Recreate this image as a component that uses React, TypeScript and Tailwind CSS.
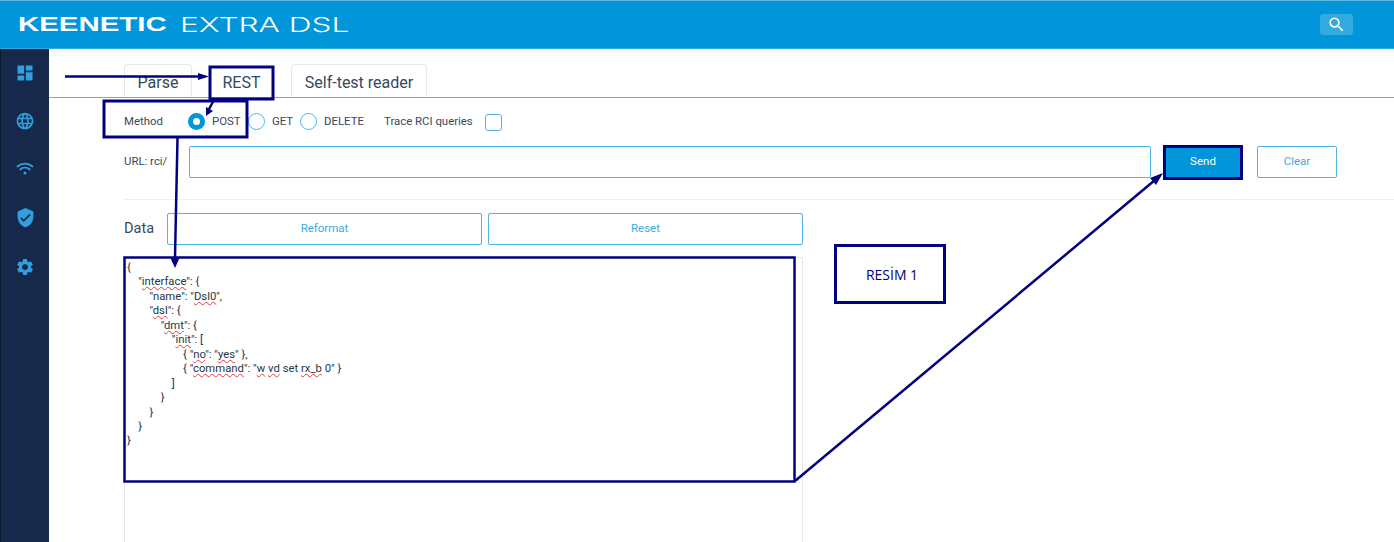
import React from "react";
import { MdDashboard, MdLanguage, MdVerifiedUser, MdSettings, MdSearch } from "react-icons/md";

const W = ({ children }: { children: React.ReactNode }) => (
  <span className="underline decoration-wavy decoration-[#e53935] decoration-1 underline-offset-[1px] [text-decoration-skip-ink:none]">{children}</span>
);

function Radio({ checked, label, labelClass }: { checked?: boolean; label: string; labelClass: string }) {
  return (
    <div className="flex items-center">
      {checked ? (
        <span className="w-[17px] h-[17px] rounded-full border-[5px] border-[#0096d9] bg-white" />
      ) : (
        <span className="w-[17px] h-[17px] rounded-full border border-[#4db5e8] bg-white" />
      )}
      <span className={labelClass}>{label}</span>
    </div>
  );
}

function Tab({ label, className }: { label: string; className: string }) {
  return (
    <div className={`h-[33px] flex items-center justify-center text-[16px] text-[#34495e] rounded-t-[4px] bg-white ${className}`}>
      {label}
    </div>
  );
}

function OutlineButton({ label, className }: { label: string; className: string }) {
  return (
    <button className={`h-[32px] flex items-center justify-center text-[11.5px] text-[#3fa9e0] border border-[#4db5e8] rounded-[2px] bg-white ${className}`}>
      {label}
    </button>
  );
}

const code = (
  <pre className="text-[11.3px] leading-[14.45px] text-[#263645] [font-family:Roboto,sans-serif]">
    {"{\n    \""}<W>interface</W>{"\": {\n        \"name\": \""}<W>Dsl0</W>{"\",\n        \""}<W>dsl</W>{"\": {\n            \""}<W>dmt</W>{"\": {\n                \""}<W>init</W>{"\": [\n                    { \""}<W>no</W>{"\": \""}<W>yes</W>{"\" },\n                    { \""}<W>command</W>{"\": \""}<W>w</W>{" "}<W>vd</W>{" set "}<W>rx_b</W>{" 0\" }\n                ]\n            }\n        }\n    }\n}"}
  </pre>
);

export default function App() {
  return (
    <div className="relative w-[1394px] h-[542px] overflow-hidden bg-white [font-family:Roboto,sans-serif] flex flex-col">
      {/* Header */}
      <header className="h-[49px] shrink-0 bg-[#0096d9] border-t border-t-[#5fb8e0] border-b border-b-[#33a9e0] flex items-center pl-[18px] pr-[41px] overflow-hidden">
        <div className="w-[162px] shrink-0 mt-[2px] [font-family:'Liberation_Sans',sans-serif]">
          <span className="inline-block origin-left scale-x-[1.47] font-bold text-[20px] leading-none text-white whitespace-nowrap">KEENETIC</span>
        </div>
        <div className="shrink-0 mt-[2px] [font-family:Inter,sans-serif]">
          <span className="inline-block origin-left scale-x-[1.58] font-light text-[20px] leading-none text-white whitespace-nowrap">EXTRA DSL</span>
        </div>
        <div className="ml-auto w-[33px] h-[21px] rounded-[3px] bg-white/20 flex items-center justify-center">
          <MdSearch className="text-white" size={19} />
        </div>
      </header>

      <div className="flex flex-1 min-h-0">
        {/* Sidebar */}
        <aside className="w-[49px] shrink-0 bg-[#17294a] border-l border-l-[#0f1a2e] flex flex-col text-[#2f9fe0]">
          <div className="h-[48px] flex items-center justify-center"><MdDashboard size={20} /></div>
          <div className="h-[48px] flex items-center justify-center"><MdLanguage size={20} /></div>
          <div className="h-[48px] flex items-center justify-center">
            <svg width="20" height="20" viewBox="0 0 20 20" fill="none" stroke="currentColor" strokeWidth="1.8" strokeLinecap="round">
              <path d="M2.5 7.5C6.7 3.7 13.3 3.7 17.5 7.5" />
              <path d="M5.2 10.5C8 8 12 8 14.8 10.5" />
              <circle cx="10" cy="14" r="1.5" fill="currentColor" stroke="none" />
            </svg>
          </div>
          <div className="h-[49px] flex items-center justify-center"><MdVerifiedUser size={21} /></div>
          <div className="h-[49px] flex items-center justify-center"><MdSettings size={20} /></div>
        </aside>

        {/* Main */}
        <main className="flex-1 min-w-0 flex flex-col pt-[16px]">
          <div className="flex items-end pl-[75px] gap-[17px] border-b border-b-[#4db5e8] h-[33px]">
            <Tab label="Parse" className="w-[68px] pt-[3px] border border-[#e3e8ee] border-b-0" />
            <Tab label="REST" className="w-[65px] pt-[5px] border-0" />
            <Tab label="Self-test reader" className="w-[136px] pt-[3px] border border-[#e3e8ee] border-b-0" />
          </div>

          <div className="flex items-center h-[46px] mt-[1px] pl-[75px] text-[11.4px] text-[#34495e]">
            <span className="w-[64px]">Method</span>
            <Radio checked label="POST" labelClass="ml-[7px] w-[36px]" />
            <Radio label="GET" labelClass="ml-[7px] w-[28px]" />
            <Radio label="DELETE" labelClass="ml-[7px] w-[60px]" />
            <span className="w-[101px]">Trace RCI queries</span>
            <span className="w-[17px] h-[17px] border border-[#4db5e8] rounded-[3px] bg-white" />
          </div>

          <div className="flex items-center h-[32px] mt-[1px] pl-[75px] text-[11.4px] text-[#34495e]">
            <span className="w-[65px]">URL: rci/</span>
            <div className="w-[962px] h-[32px] border border-[#4db5e8] rounded-[2px]" />
            <button className="ml-[13px] w-[78px] h-[32px] bg-[#0096d9] text-white text-[11.5px]">Send</button>
            <OutlineButton label="Clear" className="ml-[15px] w-[80px]" />
          </div>

          <div className="h-px bg-[#eef0f3] ml-[75px] mt-[21px]" />

          <div className="flex items-center h-[32px] mt-[13px] pl-[75px]">
            <span className="w-[43px] text-[14.5px] text-[#34495e]">Data</span>
            <OutlineButton label="Reformat" className="w-[315px]" />
            <OutlineButton label="Reset" className="ml-[6px] w-[315px]" />
          </div>

          <div className="ml-[75px] mt-[12px] w-[679px] flex-1 border border-[#e3e6ee] border-b-0 pl-[2px] pt-[3px] overflow-hidden">
            {code}
          </div>
        </main>
      </div>

      {/* Annotation layer */}
      <svg className="absolute inset-0 pointer-events-none" width="1394" height="542" fill="none" stroke="#000080" strokeWidth="2.5">
        <rect x="210" y="67" width="63" height="32" strokeWidth="3" />
        <rect x="104" y="101" width="143" height="36" strokeWidth="3" />
        <rect x="1164.5" y="146.5" width="77" height="32" strokeWidth="3" />
        <rect x="124.5" y="257.5" width="670" height="224" strokeWidth="2.5" />
        <path d="M65 76.5H200" strokeWidth="2.5" />
        <path d="M209 76.5L198 73V80Z" fill="#000080" stroke="none" />
        <path d="M214 100L209 109" strokeWidth="2.5" />
        <path d="M206 116L206 107L213 111Z" fill="#000080" stroke="none" />
        <path d="M177.5 138L175 258" strokeWidth="2.5" />
        <path d="M175 268L170 257H180Z" fill="#000080" stroke="none" />
        <path d="M795 481L1155 180" strokeWidth="2.5" />
        <path d="M1163 173L1150 178L1156 185Z" fill="#000080" stroke="none" />
      </svg>
      <div className="absolute left-[834px] top-[244px] w-[112px] h-[60px] pl-[4px] border-[3px] border-[#000080] bg-white flex items-center justify-center text-[14px] text-[#000080] [font-family:'Open_Sans',sans-serif]">
        RESİM 1
      </div>
    </div>
  );
}
